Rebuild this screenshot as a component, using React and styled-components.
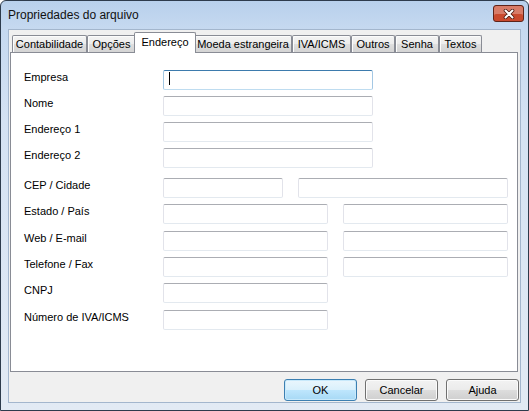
import React from "react";
import styled, { createGlobalStyle } from "styled-components";

const GlobalStyle = createGlobalStyle`
  html, body {
    margin: 0;
    padding: 0;
    background: #ffffff;
  }
  * {
    box-sizing: border-box;
  }
`;

const Window = styled.div`
  width: 529px;
  height: 411px;
  display: flex;
  flex-direction: column;
  border: 1px solid #2d3b4c;
  border-radius: 6px 6px 0 0;
  padding: 0 7px 7px;
  background: linear-gradient(#b8d0ec 0px, #c6d9f0 28px, #d4e2f3 120px, #e2eaf4 100%);
  font-family: "Liberation Sans", Arial, sans-serif;
  font-size: 11px;
  color: #000;
`;

const TitleBar = styled.div`
  height: 28px;
  flex: none;
  display: flex;
  align-items: flex-start;
  justify-content: space-between;
  padding-right: 4px;
  margin-right: -7px;
`;

const Title = styled.div`
  font-size: 12px;
  line-height: 15px;
  margin-top: 7px;
  color: #111;
`;

const CloseButton = styled.span`
  display: inline-flex;
  margin-top: 4px;
  width: 31px;
  height: 17px;
  align-items: center;
  justify-content: center;
  border: 1px solid #5e241a;
  border-radius: 3px;
  background: #c94a2e;
  box-shadow: inset 0 8px 0 rgba(255, 255, 255, 0.28);
`;

const Client = styled.div`
  flex: 1;
  display: flex;
  flex-direction: column;
  border: 1px solid #a3b6cd;
  background: #f0f0f0;
  padding: 2px 2px 0 1px;
`;

const TabStrip = styled.div`
  position: relative;
  z-index: 1;
  height: 20px;
  display: flex;
  align-items: flex-end;
  padding-left: 2px;
`;

const Tab = styled.div`
  width: ${(p) => p.$w}px;
  height: ${(p) => (p.$active ? 21 : 17)}px;
  margin: 0 ${(p) => (p.$active ? -2 : 0)}px ${(p) => (p.$active ? -1 : 0)}px;
  display: flex;
  align-items: center;
  justify-content: center;
  padding-bottom: ${(p) => (p.$active ? 2 : 0)}px;
  border: 1px solid #898c95;
  border-bottom: none;
  border-radius: 2px 2px 0 0;
  background: ${(p) =>
    p.$active
      ? "#ffffff"
      : "linear-gradient(#f4f4f4 0%, #ececec 50%, #dfdfdf 50%, #d4d4d4 100%)"};
  box-shadow: ${(p) => (p.$active ? "none" : "inset 1px 1px 0 #fcfcfc")};
  position: relative;
  z-index: ${(p) => (p.$active ? 2 : 1)};
  white-space: nowrap;
`;

const Panel = styled.div`
  height: 320px;
  flex: none;
  border: 1px solid #898c95;
  background: #ffffff;
  padding: 17px 0 0 13px;
  display: flex;
  flex-direction: column;
`;

const Row = styled.div`
  display: flex;
  align-items: flex-start;
  margin-top: ${(p) => p.$gap}px;
`;

const Label = styled.div`
  width: 139px;
  flex: none;
  line-height: 13px;
  padding-top: 1px;
`;

const Field = styled.div`
  width: ${(p) => p.$w}px;
  height: 20px;
  flex: none;
  margin-left: ${(p) => p.$offset || 0}px;
  border: 1px solid;
  border-radius: 2px;
  background: #fff;
  border-color: ${(p) =>
    p.$focused
      ? "#3d7bad #a4c8e4 #bedcf0 #a4c8e4"
      : "#abadb3 #e2e3ea #e3e9ef #e2e3ea"};
  display: flex;
  align-items: flex-start;
`;

const Caret = styled.span`
  width: 1px;
  height: 13px;
  margin: 1px 0 0 5px;
  background: #000;
`;

const ButtonRow = styled.div`
  display: flex;
  justify-content: flex-end;
  gap: 8px;
  margin-top: 7px;
  margin-right: -1px;
`;

const Button = styled.div`
  width: 73px;
  height: 22px;
  display: flex;
  align-items: center;
  justify-content: center;
  border: 1px solid ${(p) => (p.$default ? "#3c7fb1" : "#707070")};
  border-radius: 3px;
  background: ${(p) =>
    p.$default
      ? "linear-gradient(#eaf6fd 0%, #d9f0fc 50%, #bee6fd 50%, #a7d9f5 100%)"
      : "linear-gradient(#f2f2f2 0%, #ebebeb 50%, #dddddd 50%, #cfcfcf 100%)"};
  box-shadow: inset 0 0 0 1px ${(p) => (p.$default ? "#c8e9fb" : "#fbfbfb")};
`;

const tabs = [
  { name: "Contabilidade", w: 75 },
  { name: "Opções", w: 49 },
  { name: "Endereço", w: 62, active: true },
  { name: "Moeda estrangeira", w: 98 },
  { name: "IVA/ICMS", w: 59 },
  { name: "Outros", w: 44 },
  { name: "Senha", w: 44 },
  { name: "Textos", w: 43 },
];

// each row: label, gap above it, then the fields (width, offset from previous)
const rows = [
  { label: "Empresa", gap: 0, fields: [{ w: 210, focused: true }] },
  { label: "Nome", gap: 6, fields: [{ w: 210 }] },
  { label: "Endereço 1", gap: 6, fields: [{ w: 210 }] },
  { label: "Endereço 2", gap: 6, fields: [{ w: 210 }] },
  { label: "CEP / Cidade", gap: 10, fields: [{ w: 120 }, { w: 210, offset: 15 }] },
  { label: "Estado / País", gap: 6, fields: [{ w: 165 }, { w: 165, offset: 15 }] },
  { label: "Web / E-mail", gap: 7, fields: [{ w: 165 }, { w: 165, offset: 15 }] },
  { label: "Telefone / Fax", gap: 6, fields: [{ w: 165 }, { w: 165, offset: 15 }] },
  { label: "CNPJ", gap: 6, fields: [{ w: 165 }] },
  { label: "Número de IVA/ICMS", gap: 7, fields: [{ w: 165 }] },
];

function CloseGlyph() {
  return (
    <svg width="12" height="10" viewBox="0 0 12 10">
      <path d="M2.5 1.5 L9.5 8.5 M9.5 1.5 L2.5 8.5" stroke="#4a1a10" strokeWidth="3.6" strokeLinecap="round" />
      <path d="M2.5 1.5 L9.5 8.5 M9.5 1.5 L2.5 8.5" stroke="#ffffff" strokeWidth="2" strokeLinecap="round" />
    </svg>
  );
}

function App() {
  return (
    <>
      <GlobalStyle />
      <Window>
        <TitleBar>
          <Title>Propriedades do arquivo</Title>
          <CloseButton>
            <CloseGlyph />
          </CloseButton>
        </TitleBar>

        <Client>
          <TabStrip>
            {tabs.map((t) => (
              <Tab key={t.name} $w={t.w} $active={t.active}>
                {t.name}
              </Tab>
            ))}
          </TabStrip>

          <Panel>
            {rows.map((r) => (
              <Row key={r.label} $gap={r.gap}>
                <Label>{r.label}</Label>
                {r.fields.map((f, i) => (
                  <Field key={i} $w={f.w} $offset={f.offset} $focused={f.focused}>
                    {f.focused && <Caret />}
                  </Field>
                ))}
              </Row>
            ))}
          </Panel>

          <ButtonRow>
            <Button $default>OK</Button>
            <Button>Cancelar</Button>
            <Button>Ajuda</Button>
          </ButtonRow>
        </Client>
      </Window>
    </>
  );
}

export default App;
